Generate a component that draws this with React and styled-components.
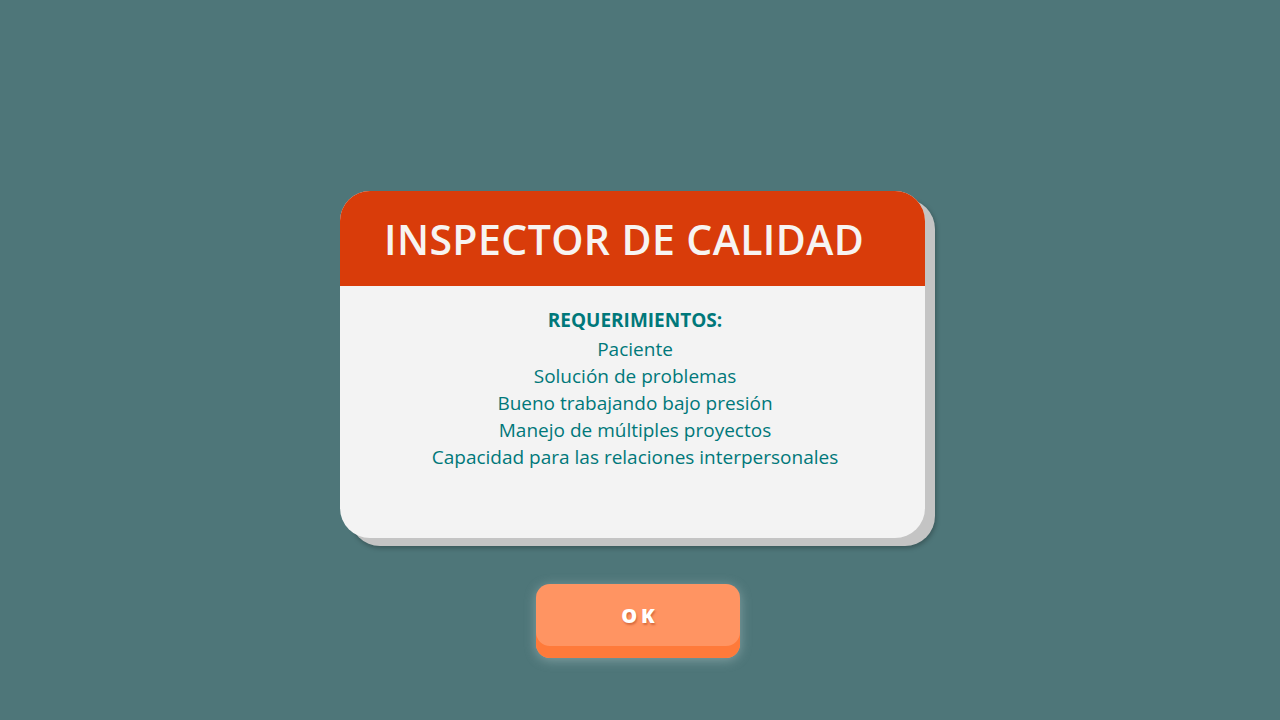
import React from "react";
import styled, { createGlobalStyle } from "styled-components";

const GlobalStyle = createGlobalStyle`
  html, body {
    margin: 0;
    padding: 0;
    background: #4e7679;
    font-family: "Open Sans", "Noto Sans", sans-serif;
  }
`;

const Screen = styled.div`
  width: 1280px;
  height: 720px;
  display: flex;
  flex-direction: column;
  align-items: center;
  padding-top: 191px;
  box-sizing: border-box;
`;

const Card = styled.div`
  width: 585px;
  height: 347px;
  margin-left: -15px;
  border-radius: 30px;
  background: #f3f3f3;
  overflow: hidden;
  display: flex;
  flex-direction: column;
  box-shadow: 10px 8px 0 #c4c4c4, 11px 10px 5px rgba(0, 0, 0, 0.28);
`;

const Header = styled.div`
  height: 95px;
  background: #d93c0a;
  display: flex;
  align-items: center;
  padding-left: 44px;
  box-sizing: border-box;
`;

const Title = styled.h1`
  margin: 0;
  color: #f7f4f2;
  font-size: 41px;
  font-weight: 600;
  letter-spacing: 0.4px;
`;

const Body = styled.div`
  padding: 21px 0 0 5px;
  display: flex;
  flex-direction: column;
  align-items: center;
  color: #00787a;
  font-size: 19px;
  line-height: 27px;
`;

const Heading = styled.div`
  font-weight: 700;
  margin-bottom: 2px;
`;

const Item = styled.div`
  font-weight: 400;
`;

const OkButton = styled.button`
  margin-top: 46px;
  margin-left: -4px;
  width: 204px;
  height: 74px;
  border: none;
  border-radius: 14px;
  background: #ff9462;
  box-shadow: inset 0 -12px 0 #ff7a3a, 0 2px 12px rgba(230, 240, 240, 0.35);
  color: #ffffff;
  font-family: "Open Sans", "Noto Sans", sans-serif;
  font-size: 20px;
  font-weight: 800;
  letter-spacing: 4px;
  padding: 0 0 12px 4px;
  text-shadow: 1px 2px 2px rgba(190, 80, 40, 0.6);
  cursor: pointer;
`;

const requirements = [
  "Paciente",
  "Solución de problemas",
  "Bueno trabajando bajo presión",
  "Manejo de múltiples proyectos",
  "Capacidad para las relaciones interpersonales",
];

export default function App() {
  return (
    <Screen>
      <GlobalStyle />
      <Card>
        <Header>
          <Title>INSPECTOR DE CALIDAD</Title>
        </Header>
        <Body>
          <Heading>REQUERIMIENTOS:</Heading>
          {requirements.map((r) => (
            <Item key={r}>{r}</Item>
          ))}
        </Body>
      </Card>
      <OkButton>OK</OkButton>
    </Screen>
  );
}
